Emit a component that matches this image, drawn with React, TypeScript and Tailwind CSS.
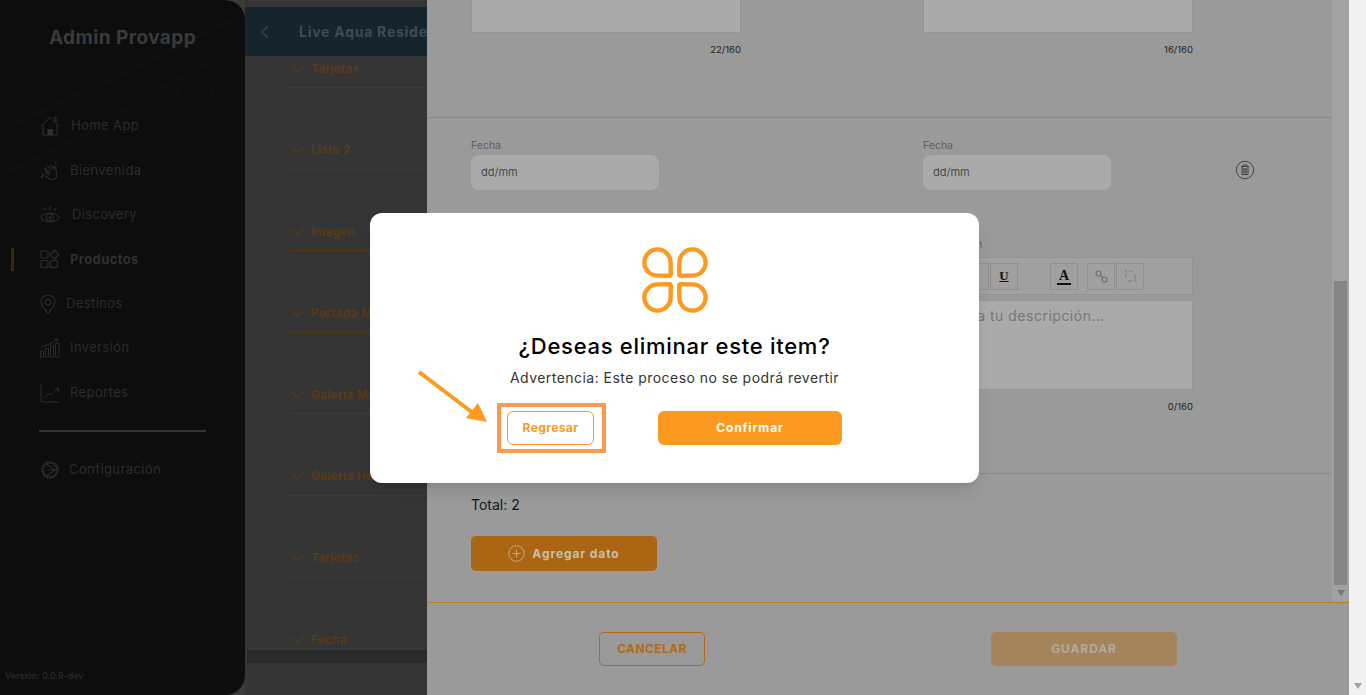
import React from "react";

const stroke = "#2e2e2e";

function HomeIcon() {
  return (
    <svg width="20" height="20" viewBox="0 0 20 20" fill="none" stroke={stroke} strokeWidth="1">
      <path d="M0.5 10.5 L10 1.5 L19.5 10.5" />
      <path d="M3 8.5 V19 H17 V8.5" />
      <path d="M14.5 5 V1 H16 V7" />
      <rect x="8" y="13.5" width="4.5" height="5.5" fill={stroke} />
    </svg>
  );
}
function HandIcon() {
  return (
    <svg width="20" height="20" viewBox="0 0 20 20" fill="none" stroke={stroke} strokeWidth="1.1">
      <path d="M5 10 L9.5 14 M4.5 7 L10 12 M7 4.5 L11.5 9.5 M10 3.5 L13.5 8 L14 5 C15 5 15.5 6 15.5 7 L17 13 C17.5 17 14 19.5 10.5 18.5 C9 18 7.5 16.5 6 15" />
      <path d="M2 13 L4 15 M1 15.5 L3 17 M15 1 L16.5 2.5" strokeWidth="1.6" />
    </svg>
  );
}
function EyeIcon() {
  return (
    <svg width="20" height="20" viewBox="0 0 20 20" fill="none" stroke={stroke} strokeWidth="1.1">
      <path d="M0.5 12.5 C5 6.5 15 6.5 19.5 12.5 C15 18.5 5 18.5 0.5 12.5 Z" />
      <circle cx="10" cy="12.5" r="3.5" />
      <circle cx="10" cy="12.5" r="1" />
      <path d="M10 1 V5 M3.5 2.5 L5.5 5.5 M16.5 2.5 L14.5 5.5" />
    </svg>
  );
}
function GridIcon() {
  return (
    <svg width="20" height="20" viewBox="0 0 20 20" fill="none" stroke={stroke} strokeWidth="1.1">
      <rect x="1" y="2" width="7" height="7" rx="1" />
      <rect x="1" y="11.5" width="7" height="7" rx="1" />
      <rect x="10.5" y="11.5" width="7" height="7" rx="1" />
      <path d="M14.5 1 L19 5.5 L14.5 10 L10 5.5 Z" />
    </svg>
  );
}
function PinIcon() {
  return (
    <svg width="16" height="20" viewBox="0 0 16 20" fill="none" stroke={stroke} strokeWidth="1.1">
      <path d="M8 19 C4 15 1 11.5 1 8 A7 7 0 0 1 15 8 C15 11.5 12 15 8 19 Z" />
      <circle cx="8" cy="8" r="2.8" />
    </svg>
  );
}
function BarsIcon() {
  return (
    <svg width="20" height="20" viewBox="0 0 20 20" fill="none" stroke={stroke} strokeWidth="0.9">
      <rect x="0.5" y="13" width="3" height="6" />
      <rect x="5.5" y="10.5" width="3" height="8.5" />
      <rect x="10.5" y="8" width="3" height="11" />
      <rect x="15.5" y="5.5" width="3.5" height="13.5" />
      <path d="M1 9 C6 8 12 5 17 1.5 M14 1 H17.5 V4" />
    </svg>
  );
}
function ChartIcon() {
  return (
    <svg width="20" height="20" viewBox="0 0 20 20" fill="none" stroke={stroke} strokeWidth="0.9">
      <path d="M1 1 V19 H19" />
      <path d="M4 15 L9 10 L11.5 12 L18 5.5 M14.5 5 H18.5 V9" />
    </svg>
  );
}
function GearIcon() {
  return (
    <svg width="20" height="20" viewBox="0 0 20 20" fill="none" stroke={stroke} strokeWidth="1.1">
      <circle cx="10" cy="10" r="8" strokeWidth="2" strokeDasharray="1.6 1.2" />
      <circle cx="10" cy="10" r="7" />
      <path d="M6.5 4 L15.5 10 L6.5 16 M15.5 10 H8.5 " />
    </svg>
  );
}

const navItems = [
  { label: "Home App", icon: <HomeIcon />, text: "ml-[11px]" },
  { label: "Bienvenida", icon: <HandIcon />, text: "ml-[10px]" },
  { label: "Discovery", icon: <EyeIcon />, text: "ml-[12px]" },
  { label: "Productos", icon: <GridIcon />, text: "ml-[10px]", active: true },
  { label: "Destinos", icon: <PinIcon />, text: "ml-[10px]" },
  { label: "Inversión", icon: <BarsIcon />, text: "ml-[10px]" },
  { label: "Reportes", icon: <ChartIcon />, text: "ml-[10px]" },
];

function NavRow({ label, icon, text, active }: { label: string; icon: React.ReactNode; text: string; active?: boolean }) {
  return (
    <div className="flex h-[44.4px] items-center pl-[11px]">
      <div className={active ? "h-[23px] w-[3px] bg-[#3d2709]" : "h-[23px] w-[3px]"} />
      <div className="ml-[26px] flex shrink-0 items-center">{icon}</div>
      <span className={`${text} ${active ? "font-bold text-[#303030]" : "text-[#2b2b2b]"} text-[13px] tracking-[0.4px]`}>{label}</span>
    </div>
  );
}

function Sidebar() {
  return (
    <aside className="relative z-10 flex h-full w-[245px] shrink-0 flex-col overflow-hidden rounded-r-[20px] bg-[#0d0d0d]">
      <svg className="absolute left-0 top-0" width="245" height="200" viewBox="0 0 245 200" fill="none" stroke="#0f0f0f" strokeWidth="5">
        <path d="M0 130 C70 100 130 70 232 20" />
        <path d="M0 175 C70 150 150 90 215 60" />
        <circle cx="195" cy="92" r="18" strokeWidth="3" />
      </svg>
      <h1 className="relative mt-[27px] h-[22px] text-center text-[19px] font-bold leading-[22px] tracking-[0.42px] text-[#3a3a3a]">Admin Provapp</h1>
      <nav className="relative mt-[54px] pt-[1px]">
        {navItems.map((n) => (
          <NavRow key={n.label} {...n} />
        ))}
      </nav>
      <div className="relative ml-[39px] mt-[15px] h-[2px] w-[167px] bg-[#333333]" />
      <div className="relative mt-[16px] flex h-[44px] items-center pl-[40px]">
        <GearIcon />
        <span className="ml-[9px] text-[13px] tracking-[0.4px] text-[#2b2b2b]">Configuración</span>
      </div>
      <div className="relative mt-auto pb-[13px] pl-[5px] text-[9px] leading-[12px] text-[#2f2f2f]">Versión: 0.0.9-dev</div>
    </aside>
  );
}

const accordion = ["Tarjetas", "Lista 2", "Imagen", "Portada Móvil", "Galería Móvil", "Galería Hero", "Tarjetas", "Fecha"];

function Middle() {
  return (
    <section className="flex h-full w-[182px] shrink-0 flex-col bg-[#353535]">
      <div className="mt-[7px] flex h-[49px] shrink-0 items-center overflow-hidden bg-[#16252c] pl-[15px]">
        <svg width="10" height="16" viewBox="0 0 10 16" fill="none" stroke="#2f4a55" strokeWidth="1.2" className="shrink-0">
          <path d="M8 2 L2 8 L8 14" />
        </svg>
        <span className="ml-[29px] whitespace-nowrap text-[14px] font-bold tracking-[0.75px] text-[#3f4b50]">Live Aqua Residence</span>
      </div>
      <div className="h-[594px] shrink-0 overflow-hidden pl-[44px]">
        <div className="-mt-[8px] flex flex-col gap-[41.6px]">
          {accordion.map((a, i) => (
            <div key={i} className="flex h-[40px] shrink-0 items-center gap-[7px] border-b border-[#5a360c] pl-[2px] pt-[2px]">
              <svg width="13" height="8" viewBox="0 0 13 8" fill="none" stroke="#5f3a10" strokeWidth="1.1" className="shrink-0">
                <path d="M0.5 0.8 L6.5 6.8 L12.5 0.8" />
              </svg>
              <span className="whitespace-nowrap text-[12px] font-semibold tracking-[0.2px] text-[#5c3a17]">{a}</span>
            </div>
          ))}
        </div>
      </div>
      <div className="ml-[2px] h-[13px] shrink-0 bg-[#2a2a2a]" />
    </section>
  );
}

function ToolBtn({ children, className = "" }: { children?: React.ReactNode; className?: string }) {
  return (
    <div className={`flex h-[27px] w-[28px] items-center justify-center border border-[#8f8f8f] ${className}`}>{children}</div>
  );
}

function Editor() {
  return (
    <div className="w-[270px]">
      <div className="h-[14px] text-[10.5px] leading-[14px] text-[#666666]">Descripción</div>
      <div className="mt-[5px] flex h-[38px] items-center border border-[#939393] bg-[#a0a0a0] pl-[8px]">
        <ToolBtn><span className="font-['Liberation_Serif',serif] text-[13px] font-bold text-[#111111]">B</span></ToolBtn>
        <ToolBtn className="ml-[1px]"><span className="font-['Liberation_Serif',serif] text-[13px] italic text-[#111111]">I</span></ToolBtn>
        <ToolBtn className="ml-[1px]"><span className="font-['Liberation_Serif',serif] text-[13px] font-bold leading-[14px] text-[#111111] underline">U</span></ToolBtn>
        <ToolBtn className="ml-[32px]"><span className="border-b-2 border-[#111111] px-[2px] font-['Liberation_Serif',serif] text-[14px] font-bold leading-[15px] text-[#111111]">A</span></ToolBtn>
        <ToolBtn className="ml-[9px]">
          <svg width="13" height="13" viewBox="0 0 13 13" fill="none" stroke="#6e6e6e" strokeWidth="1.2">
            <circle cx="3.5" cy="3.5" r="2.5" /><circle cx="9.5" cy="9.5" r="2.5" /><path d="M5 5 L8 8" />
          </svg>
        </ToolBtn>
        <ToolBtn className="ml-[1px]">
          <svg width="13" height="14" viewBox="0 0 13 14" fill="none" stroke="#808080" strokeWidth="1.1">
            <path d="M3 4 C1 5 1 8 3 8 M10 6 C12 7 12 10 10 10 M5 3 C6 1 9 1 9 3 M4 11 C4 13 7 13 8 11 M1 1 L3 3 M11 11 L12.5 13" />
          </svg>
        </ToolBtn>
      </div>
      <div className="mt-[5px] h-[90px] border border-[#959595] bg-[#aaaaaa] pl-[9px] pt-[5px] text-[14px] leading-[20px] tracking-[0.5px] text-[#777777]">Ingresa tu descripción...</div>
      <div className="mt-[10px] text-right text-[9.5px] leading-[14px] text-[#222222]">0/160</div>
    </div>
  );
}

function DateField() {
  return (
    <div className="w-[188px]">
      <div className="h-[15px] pt-[1px] text-[10.5px] leading-[14px] text-[#5e5e5e]">Fecha</div>
      <div className="mt-[2px] flex h-[35px] items-center rounded-[8px] bg-[#aaaaaa] pl-[10px] text-[11px] text-[#4a4a4a]">dd/mm</div>
    </div>
  );
}

function Panel() {
  return (
    <section className="flex h-full w-[922px] shrink-0 flex-col bg-[#9a9a9a]">
      <div className="flex h-[602px] shrink-0 overflow-hidden">
        <div className="w-[905px] shrink-0">
          <div className="h-[118px] border-b border-[#8a8a8a] pl-[44px]">
            <div className="flex gap-[182px]">
              {["22/160", "16/160"].map((c) => (
                <div key={c} className="w-[270px]">
                  <div className="h-[33px] border-x border-b border-[#959595] bg-[#aaaaaa]" />
                  <div className="mt-[10px] text-right text-[9.5px] leading-[14px] text-[#222222]">{c}</div>
                </div>
              ))}
            </div>
          </div>
          <div className="h-[356px] border-b border-[#8a8a8a] pl-[44px] pt-[20px]">
            <div className="flex items-start">
              <DateField />
              <div className="ml-[264px]"><DateField /></div>
              <svg width="20" height="20" viewBox="0 0 20 20" fill="none" stroke="#454545" strokeWidth="1" className="ml-[124px] mt-[22px] shrink-0">
                <circle cx="10" cy="10" r="8.7" />
                <path d="M6 6.5 H14 M8 6.5 V5 H12 V6.5 M7 6.5 V14.5 H13 V6.5 M8.8 8 V13.5 M10 8 V13.5 M11.2 8 V13.5" />
              </svg>
            </div>
            <div className="mt-[48px] flex gap-[182px]">
              <Editor />
              <Editor />
            </div>
          </div>
          <div className="pl-[44px] pt-[21px]">
            <div className="text-[14px] leading-[20px] text-[#15151f]">Total: 2</div>
            <div className="mt-[21px] flex h-[35px] w-[186px] items-center justify-center gap-[7px] rounded-[5px] bg-[#ab6614] text-[12px] font-bold tracking-[0.9px] text-[#cbbfab]">
              <svg width="17" height="17" viewBox="0 0 17 17" fill="none" stroke="#c9a983" strokeWidth="1">
                <circle cx="8.5" cy="8.5" r="7.8" /><path d="M8.5 4.5 V12.5 M4.5 8.5 H12.5" />
              </svg>
              Agregar dato
            </div>
          </div>
        </div>
        <div className="flex w-[17px] shrink-0 flex-col items-center bg-[#a1a1a1] pt-[281px]">
          <div className="h-[304px] w-[13px] bg-[#858585]" />
          <div className="mt-[5px] h-0 w-0 border-x-[4px] border-t-[6px] border-x-transparent border-t-[#777777]" />
        </div>
      </div>
      <div className="flex flex-1 items-start gap-[286px] border-t border-[#b97f20] pl-[172px] pt-[29px]">
        <div className="flex h-[34px] w-[106px] items-center justify-center rounded-[5px] border border-[#b2691a] text-[12px] font-bold tracking-[0.4px] text-[#b2691a]">CANCELAR</div>
        <div className="flex h-[34px] w-[186px] items-center justify-center rounded-[5px] bg-[#a5845b] text-[12px] font-bold tracking-[0.9px] text-[#b3aa9d]">GUARDAR</div>
      </div>
    </section>
  );
}

function Petal({ className = "" }: { className?: string }) {
  return (
    <svg width="31" height="31" viewBox="0 0 31 31" fill="none" stroke="#fb9a1f" strokeWidth="4.4" className={className}>
      <path d="M15.5 2.4 A13.1 13.1 0 0 0 15.5 28.6 L27 28.8 Q28.8 28.8 28.8 27 L28.6 15.5 A13.1 13.1 0 0 0 15.5 2.4 Z" />
    </svg>
  );
}

function Modal() {
  return (
    <div className="absolute left-[370px] top-[213px] z-20 flex h-[270px] w-[609px] flex-col items-center rounded-[12px] bg-white pt-[34px] shadow-lg">
      <div className="grid grid-cols-2 gap-x-[4px] gap-y-[4px]">
        <Petal />
        <Petal className="-scale-x-100" />
        <Petal className="-scale-y-100" />
        <Petal className="-scale-100" />
      </div>
      <h2 className="mt-[17px] text-[22px] font-medium leading-[32px] tracking-[0.72px] text-black">¿Deseas eliminar este item?</h2>
      <p className="mt-[6px] text-[14px] leading-[20px] tracking-[0.46px] text-[#333333]">Advertencia: Este proceso no se podrá revertir</p>
      <div className="mt-[23px] flex h-[34px] items-center self-start pl-[137px]">
        <div className="flex h-[34px] w-[87px] items-center justify-center rounded-[6px] border border-[#fb9a1f] text-[12px] font-bold tracking-[0.4px] text-[#fb9a1f]">Regresar</div>
        <div className="ml-[64px] flex h-[34px] w-[184px] items-center justify-center rounded-[6px] bg-[#fb9a1f] text-[12px] font-bold tracking-[0.9px] text-white">Confirmar</div>
      </div>
      <div className="absolute left-[127px] top-[190px] h-[50px] w-[109px] border-4 border-[#fb9a4e]" />
      <svg className="absolute left-[47px] top-[155px]" width="76" height="66" viewBox="0 0 76 66" fill="none">
        <path d="M2 4 L56 45" stroke="#fb9a1f" strokeWidth="4" />
        <path d="M70 54 L49 50 L61 35 Z" fill="#fb9a1f" />
      </svg>
    </div>
  );
}

export default function App() {
  return (
    <div className="relative flex h-[695px] w-[1366px] overflow-hidden bg-[#3a3a3a] font-['Inter',sans-serif]">
      <Sidebar />
      <Middle />
      <Panel />
      <div className="flex h-full flex-1 flex-col items-center justify-end bg-[#f1f1f1] pb-[6px]">
        <div className="h-0 w-0 border-x-[4px] border-t-[6px] border-x-transparent border-t-[#a3a3a3]" />
      </div>
      <Modal />
    </div>
  );
}
